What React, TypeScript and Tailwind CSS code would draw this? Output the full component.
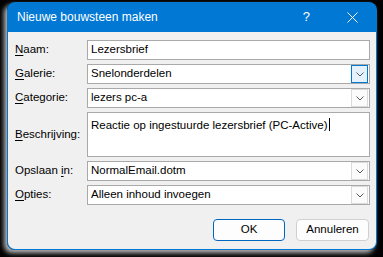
const font = { fontFamily: '"Liberation Sans", Arial, sans-serif' };

function Label({ text, access, rest }: { text?: string; access: string; rest: string }) {
  return (
    <span className="w-[72px] shrink-0 text-[11.5px] text-black">
      {text}
      <span className="underline underline-offset-2">{access}</span>
      {rest}
    </span>
  );
}

function Combo({ value, active = false }: { value: string; active?: boolean }) {
  return (
    <div className="flex h-[20px] flex-1 items-center border border-[#a9a9a9] bg-white pl-[3px]">
      <span className="flex-1 text-[11.5px] text-black">{value}</span>
      <span
        className={`mr-px flex h-[18px] w-[17px] items-center justify-center border ${
          active ? "border-[#0078d4] bg-[#e5f1fb]" : "border-[#dadada] bg-[#fbfbfb]"
        }`}
      >
        <svg width="8" height="5" viewBox="0 0 8 5">
          <path d="M0.5 0.5L4 4L7.5 0.5" fill="none" stroke="#5a5a5a" strokeWidth="1" />
        </svg>
      </span>
    </div>
  );
}

export default function App() {
  return (
    <div className="h-[257px] w-[383px] overflow-hidden bg-black pl-[7px] pt-[2px]" style={font}>
      <div className="flex h-[248px] w-[370px] flex-col rounded-[8px] shadow-[-3px_3px_5px_#b9b9b9]">
        <div className="flex h-[30px] shrink-0 items-center rounded-t-[8px] bg-[#0078d4] pl-[10px] text-white">
          <span className="flex-1 text-[12px]">Nieuwe bouwsteen maken</span>
          <span className="mr-[37px] text-[13px]">?</span>
          <svg width="11" height="11" viewBox="0 0 11 11" className="mr-[19px]">
            <path d="M0.5 0.5L10.5 10.5M10.5 0.5L0.5 10.5" stroke="white" strokeWidth="1" />
          </svg>
        </div>
        <div className="flex flex-1 flex-col rounded-b-[8px] border border-t-0 border-[#0078d4] bg-[#f0f0f0] pl-[7px] pr-[6px] pt-[8px]">
          <div className="flex flex-col gap-[4px]">
            <div className="flex items-center">
              <Label access="N" rest="aam:" />
              <div className="flex h-[20px] flex-1 items-center border border-[#a9a9a9] bg-white pl-[3px] text-[11.5px] text-black">
                Lezersbrief
              </div>
            </div>
            <div className="flex items-center">
              <Label access="G" rest="alerie:" />
              <Combo value="Snelonderdelen" active />
            </div>
            <div className="flex items-center">
              <Label access="C" rest="ategorie:" />
              <Combo value="lezers pc-a" />
            </div>
            <div className="flex items-center">
              <Label access="B" rest="eschrijving:" />
              <div className="h-[45px] flex-1 border border-[#a9a9a9] bg-white pl-[3px] pt-[3px] text-[11.5px] text-black">
                Reactie op ingestuurde lezersbrief (PC-Active)
                <span className="ml-px inline-block h-[13px] w-px translate-y-[2px] bg-black" />
              </div>
            </div>
            <div className="flex items-center">
              <Label text="Opslaan " access="i" rest="n:" />
              <Combo value="NormalEmail.dotm" />
            </div>
            <div className="flex items-center">
              <Label access="O" rest="pties:" />
              <Combo value="Alleen inhoud invoegen" />
            </div>
          </div>
          <div className="mt-[14px] flex justify-end gap-[11px] pr-[1px]">
            <button className="h-[22px] w-[72px] rounded-[4px] border border-[#0067c0] bg-[#fdfdfd] text-[11.5px] text-black">
              OK
            </button>
            <button className="h-[22px] w-[73px] rounded-[4px] border border-[#d0d0d0] bg-[#fdfdfd] text-[11.5px] text-black">
              Annuleren
            </button>
          </div>
        </div>
      </div>
    </div>
  );
}
